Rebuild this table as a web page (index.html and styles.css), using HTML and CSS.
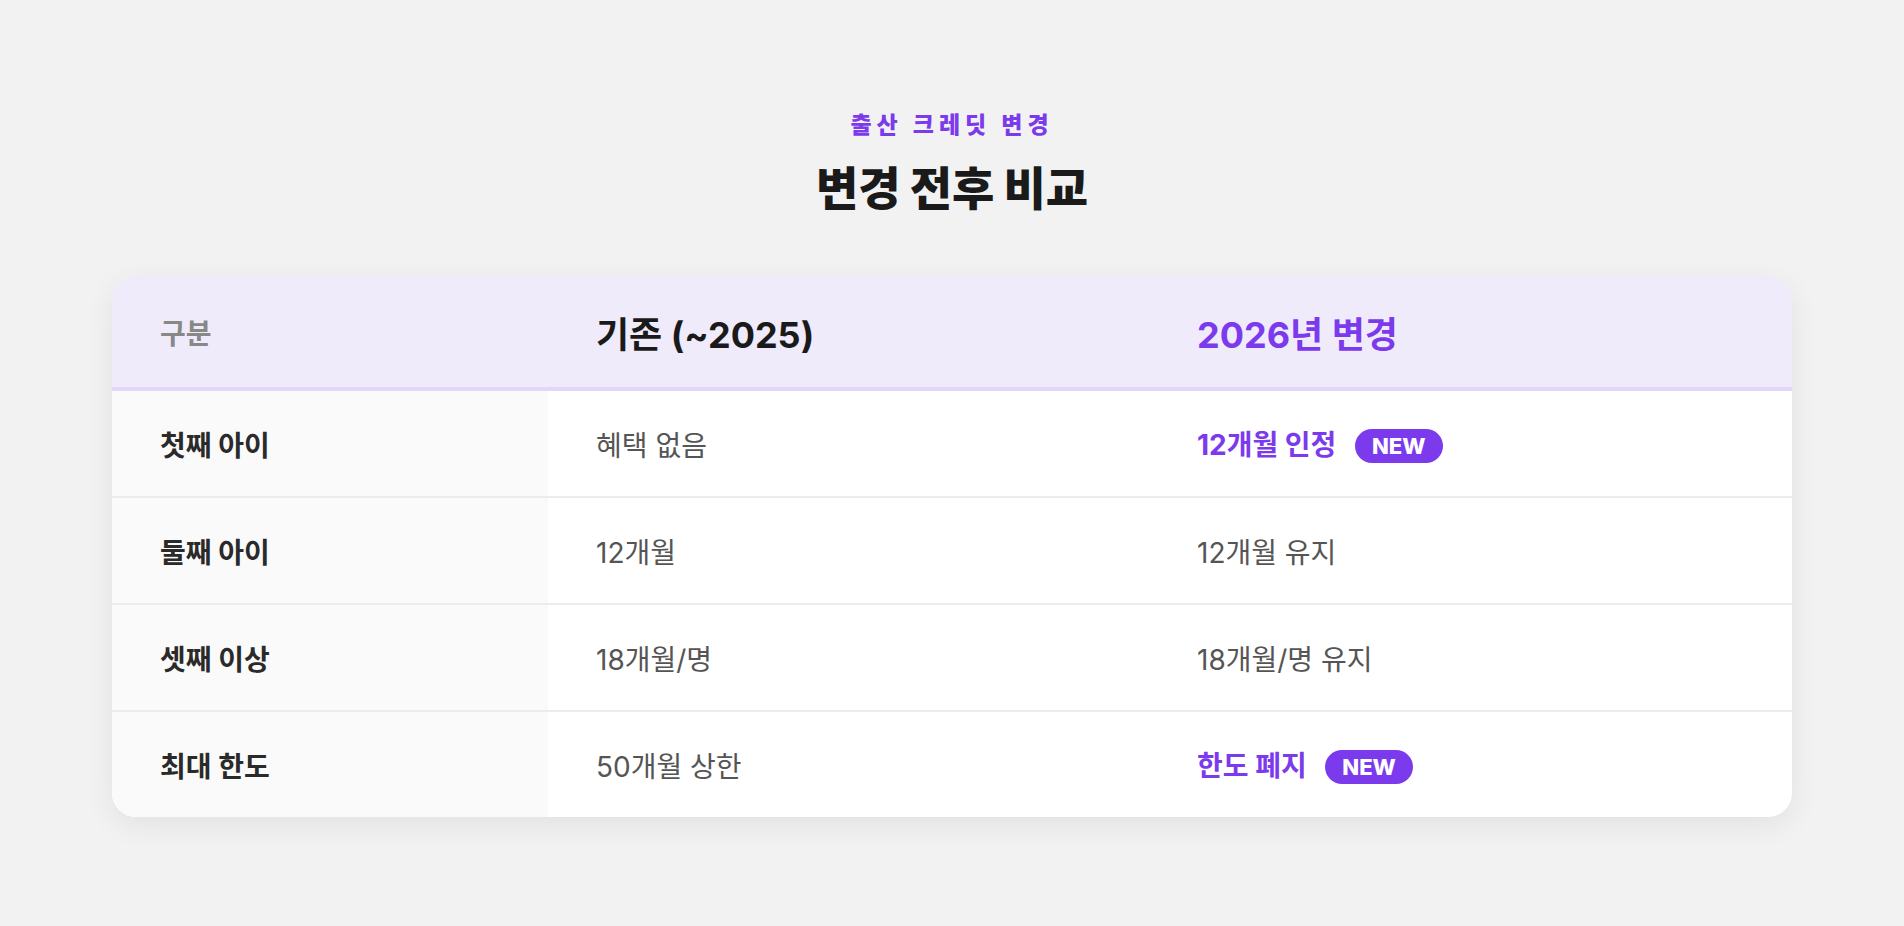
FILE: index.html
```html
<!DOCTYPE html>
<html lang="ko">
<head>
    <meta charset="UTF-8">
    <meta name="viewport" content="width=device-width, initial-scale=1.0">
    <title>변경 전후 비교</title>
    <link rel="stylesheet" href="styles.css">
</head>
<body>
    <main class="page">
        <p class="eyebrow">출산 크레딧 변경</p>
        <h1 class="title">변경 전후 비교</h1>

        <!-- 비교 표 -->
        <div class="card">
            <table class="compare">
                <colgroup>
                    <col class="col-label">
                    <col class="col-before">
                    <col class="col-after">
                </colgroup>
                <thead>
                    <tr>
                        <th class="th-label">구분</th>
                        <th class="th-before">기존 (~2025)</th>
                        <th class="th-after">2026년 변경</th>
                    </tr>
                </thead>
                <tbody>
                    <tr>
                        <td class="label">첫째 아이</td>
                        <td>혜택 없음</td>
                        <td class="hl">12개월 인정 <span class="badge">NEW</span></td>
                    </tr>
                    <tr>
                        <td class="label">둘째 아이</td>
                        <td>12개월</td>
                        <td>12개월 유지</td>
                    </tr>
                    <tr>
                        <td class="label">셋째 이상</td>
                        <td>18개월/명</td>
                        <td>18개월/명 유지</td>
                    </tr>
                    <tr>
                        <td class="label">최대 한도</td>
                        <td>50개월 상한</td>
                        <td class="hl">한도 폐지 <span class="badge">NEW</span></td>
                    </tr>
                </tbody>
            </table>
        </div>
    </main>
</body>
</html>
```

FILE: styles.css
```css
body {
    margin: 0;
    background-color: #f2f2f2;
    font-family: Inter, "Noto Sans CJK KR", sans-serif;
    color: #1a1a1a;
}
.page {
    padding: 108px 0 80px;
    text-align: center;
}
.eyebrow {
    margin: 0;
    font-size: 23px;
    line-height: 34px;
    font-weight: 800;
    letter-spacing: 5px;
    color: #7c3aed;
}
.title {
    margin: 18px 0 0;
    font-size: 46px;
    line-height: 56px;
    font-weight: 900;
    color: #1a1a1a;
}
.card {
    width: 1680px;
    margin: 61px auto 0;
    background-color: #fff;
    border-radius: 24px;
    overflow: hidden;
    box-shadow: 0 8px 30px rgba(0, 0, 0, 0.07);
    text-align: left;
}
.compare {
    width: 100%;
    border-collapse: separate;
    border-spacing: 0;
    table-layout: fixed;
}
.col-label {
    width: 436px;
}
.col-before {
    width: 601px;
}
.compare th {
    height: 110px;
    padding: 0 48px;
    background-color: #efebfa;
    border-bottom: 4px solid #e2d7f8;
    text-align: left;
    font-size: 36px;
    font-weight: 700;
}
.compare .th-label {
    font-size: 28px;
    font-weight: 600;
    color: #888;
}
.compare .th-before {
    color: #1a1a1a;
}
.compare .th-after {
    color: #7c3aed;
}
.compare td {
    height: 105px;
    padding: 0 48px;
    border-bottom: 2px solid #ececec;
    font-size: 28px;
    color: #555;
    white-space: nowrap;
}
.compare tr:last-child td {
    border-bottom: none;
}
.compare td.label {
    background-color: #fafafa;
    font-weight: 700;
    color: #2a2a2a;
}
.compare td.hl {
    font-weight: 700;
    color: #7c3aed;
}
.badge {
    display: inline-block;
    vertical-align: middle;
    margin-left: 12px;
    padding: 0 17px;
    height: 34px;
    line-height: 34px;
    border-radius: 17px;
    background-color: #7c3aed;
    color: #fff;
    font-family: Inter, sans-serif;
    font-size: 22px;
    font-weight: 800;
    position: relative;
    top: -1px;
}
```
